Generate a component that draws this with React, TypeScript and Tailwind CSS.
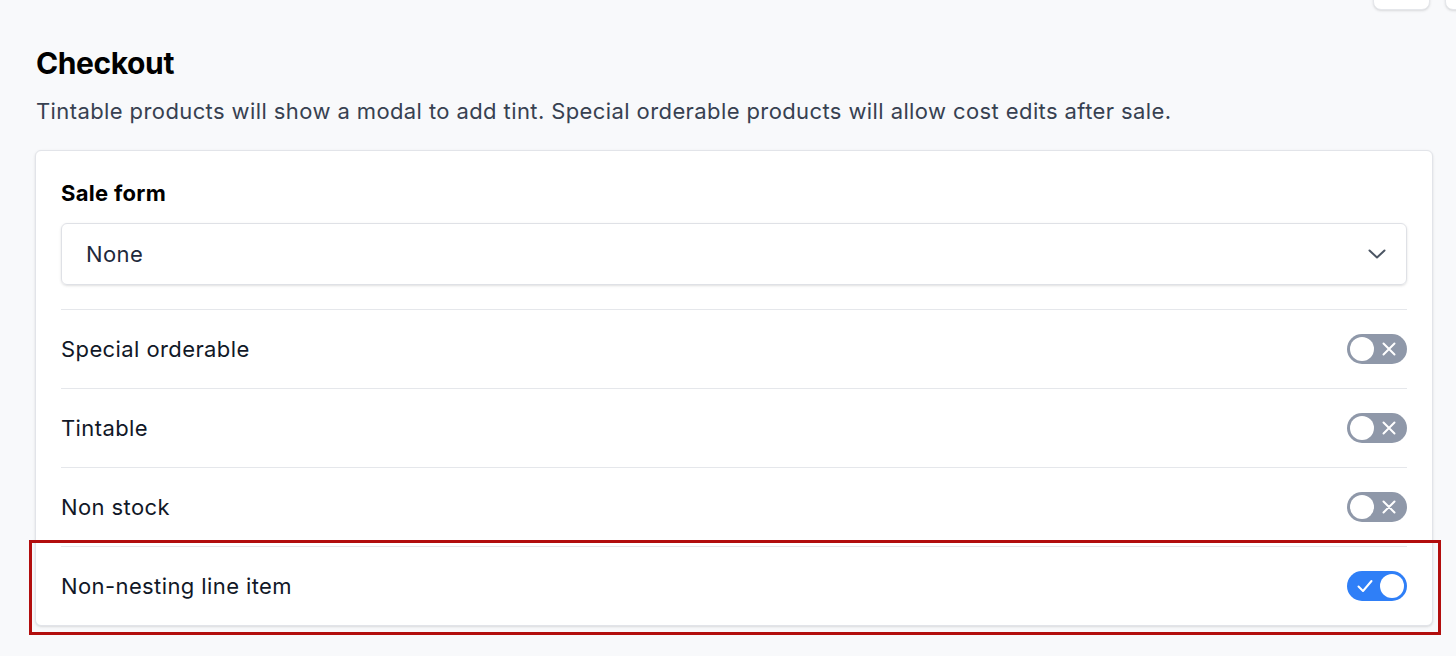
import React from "react";

function Toggle({ on }: { on: boolean }) {
  if (on) {
    return (
      <div className="flex h-[30px] w-[60px] shrink-0 items-center justify-between rounded-full bg-[#2f7ff7] pl-[10px] pr-[3px]">
        <svg width="16" height="14" viewBox="0 0 16 14" fill="none">
          <path d="M1.5 7.5 L6 12 L14.5 2" stroke="white" strokeWidth="2" strokeLinecap="round" strokeLinejoin="round" />
        </svg>
        <div className="h-[24px] w-[24px] rounded-full bg-white" />
      </div>
    );
  }
  return (
    <div className="flex h-[30px] w-[60px] shrink-0 items-center justify-between rounded-full bg-[#8f98a9] pl-[3px] pr-[11px]">
      <div className="h-[24px] w-[24px] rounded-full bg-white" />
      <svg width="14" height="14" viewBox="0 0 14 14" fill="none">
        <path d="M1.5 1.5 L12.5 12.5 M12.5 1.5 L1.5 12.5" stroke="white" strokeWidth="2" strokeLinecap="round" />
      </svg>
    </div>
  );
}

function Row({ label, on }: { label: string; on: boolean }) {
  return (
    <div className="flex h-[79px] items-center justify-between border-t border-[#e5e7eb]">
      <span className="text-[22px] tracking-[0.4px] text-[#111827]">{label}</span>
      <Toggle on={on} />
    </div>
  );
}

export default function App() {
  return (
    <div
      className="relative h-[656px] w-[1456px] overflow-hidden bg-[#f8f9fb]"
      style={{ fontFamily: "Inter, 'Noto Sans', sans-serif" }}
    >
      <div className="absolute left-[1373px] top-[-12px] flex gap-[15px]">
        <div className="h-[22px] w-[57px] rounded-lg border border-[#e5e7eb] bg-white shadow-sm" />
        <div className="h-[22px] w-[40px] rounded-lg border border-[#e5e7eb] bg-white shadow-sm" />
      </div>

      <div className="pl-[35px] pr-[23px] pt-[43px]">
        <h1 className="pl-px text-[30px] font-bold leading-[40px] tracking-[-0.4px] text-black">Checkout</h1>
        <p className="mt-[13px] pl-px text-[22px] leading-[30px] tracking-[0.4px] text-[#374151]">
          Tintable products will show a modal to add tint. Special orderable products will allow cost edits after sale.
        </p>

        <div className="mt-[24px] rounded-md border border-[#e2e4e9] bg-white px-[25px] pt-[27px] shadow-sm">
          <div className="text-[22px] font-bold leading-[30px] tracking-[0.3px] text-black">Sale form</div>
          <div className="mt-[15px] flex h-[62px] items-center justify-between rounded-md border border-[#dfe1e6] pl-[24px] pr-[20px] shadow-sm">
            <span className="text-[22px] tracking-[0.4px] text-[#1e293b]">None</span>
            <svg width="18" height="10" viewBox="0 0 18 10" fill="none">
              <path d="M1.5 1.5 L9 8.5 L16.5 1.5" stroke="#4b5563" strokeWidth="2" strokeLinecap="round" strokeLinejoin="round" />
            </svg>
          </div>
          <div className="mt-[24px]">
            <Row label="Special orderable" on={false} />
            <Row label="Tintable" on={false} />
            <Row label="Non stock" on={false} />
            <Row label="Non-nesting line item" on={true} />
          </div>
        </div>
      </div>

      <div className="pointer-events-none absolute left-[29px] top-[540px] h-[95px] w-[1412px] border-[3px] border-[#b20d0d]" />
    </div>
  );
}
